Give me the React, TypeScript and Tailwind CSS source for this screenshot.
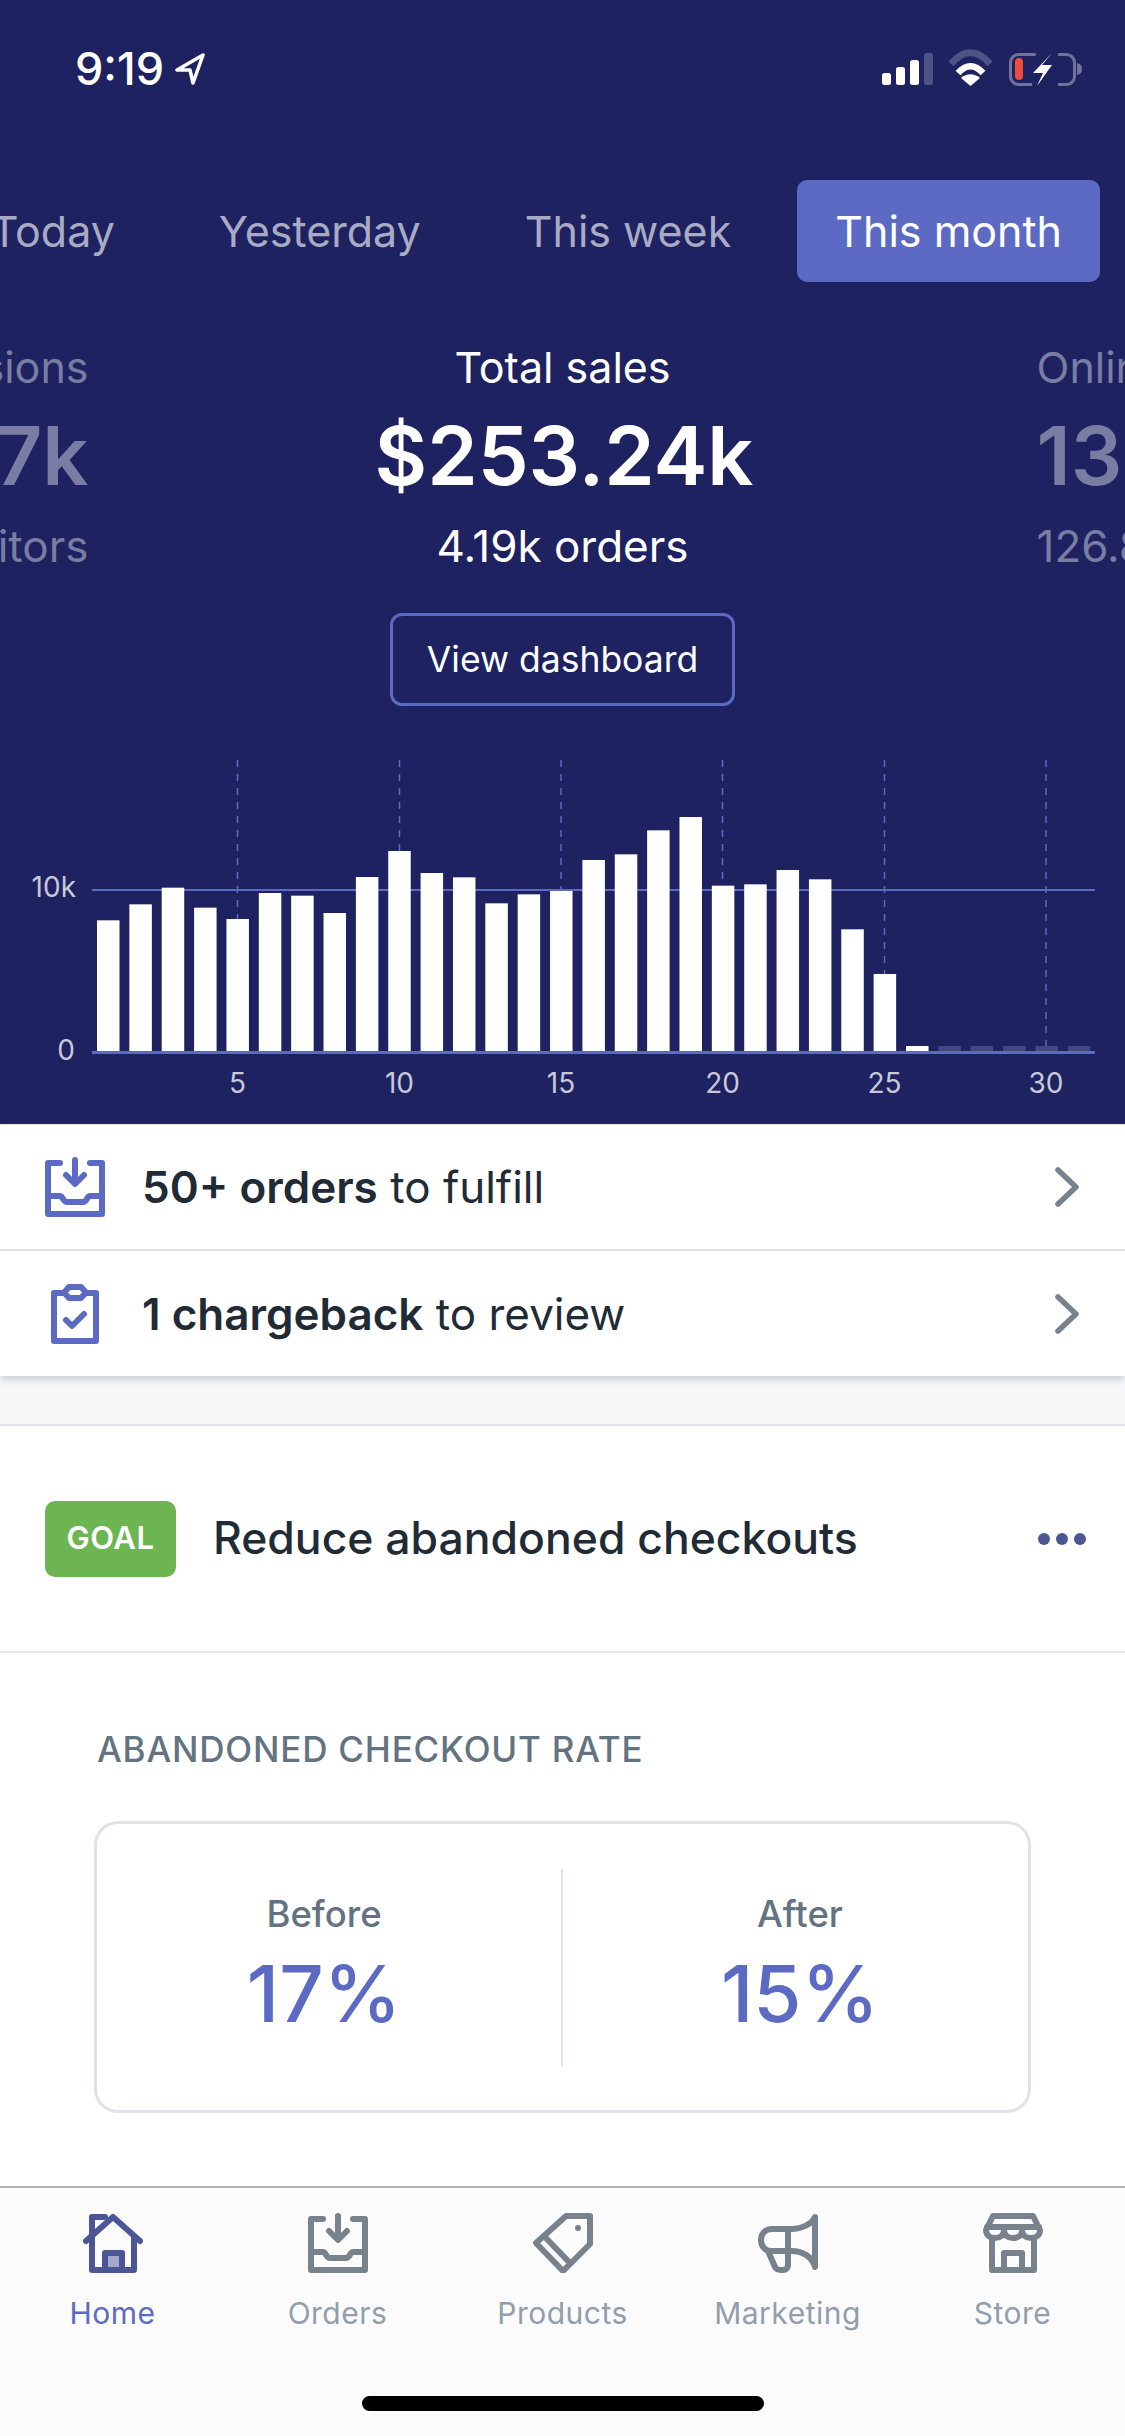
import React from "react";

const bars = [541, 493, 443, 503, 537, 459, 467, 519, 411, 333, 399, 412, 490, 463, 453, 360, 343, 271, 231, 437, 433, 390, 418, 568, 702, 918];

function Chart() {
  const y0 = 1052;
  return (
    <svg width="1125" height="374" viewBox="0 750 1125 374" className="block">
      {[237.5, 399.5, 561, 722.5, 884.5, 1046].map((x) => (
        <line key={x} x1={x} x2={x} y1={760} y2={1052} stroke="#5c6ac4" strokeWidth="1.5" strokeDasharray="7 7" />
      ))}
      <rect x="92" y="889" width="1003" height="2" fill="#5c6ac4" />
      {bars.map((t, i) => {
        const top = 740 + t / 3;
        return <rect key={i} x={97 + i * 32.36} y={top} width="22.5" height={y0 - top} fill="#ffffff" />;
      })}
      {[26, 27, 28, 29, 30].map((i) => (
        <rect key={i} x={97 + i * 32.36} y={1046} width="22.5" height="6" fill="#43477f" />
      ))}
      <rect x="92" y="1051" width="1003" height="3" fill="#5c6ac4" />
      <g fill="#c7c8d8" fontSize="28" fontFamily="Inter, sans-serif" textAnchor="middle">
        <text x="237.5" y="1093">5</text>
        <text x="399.5" y="1093">10</text>
        <text x="561" y="1093">15</text>
        <text x="722.5" y="1093">20</text>
        <text x="884.5" y="1093">25</text>
        <text x="1046" y="1093">30</text>
      </g>
      <g fill="#c7c8d8" fontSize="28" fontFamily="Inter, sans-serif" textAnchor="end">
        <text x="76" y="897">10k</text>
        <text x="75" y="1060">0</text>
      </g>
    </svg>
  );
}

function StatusIcons() {
  return (
    <svg width="193" height="32" viewBox="882 53 193 32" className="block overflow-visible">
      <rect x="882" y="73" width="9" height="12" rx="2.5" fill="#fff" />
      <rect x="896" y="67" width="9" height="18" rx="2.5" fill="#fff" />
      <rect x="910" y="60" width="9" height="25" rx="2.5" fill="#fff" />
      <rect x="924" y="53" width="9" height="32" rx="2.5" fill="#4d5387" />
      <path d="M951 64 C963 49 978 49 990 64" fill="none" stroke="#4d5387" strokeWidth="7" />
      <path d="M958 73 C966 64 975 64 983 73" fill="none" stroke="#fff" strokeWidth="6.5" />
      <path d="M961 78 C967 73 974 73 980 78 L970.5 86 Z" fill="#fff" />
      <rect x="1010.5" y="54.5" width="64" height="30" rx="8" fill="none" stroke="#6f739b" strokeWidth="3" />
      <rect x="1015" y="58" width="8" height="22" rx="4" fill="#ee4d3a" />
      <path d="M1036 52 H1058 V86 H1032 Z" fill="#1e2260" />
      <path d="M1052 53 L1033 73 H1043 L1037 86 L1052 65 H1042 Z" fill="#fff" />
      <path d="M1077 63 C1081 64 1082 66 1082 69 C1082 72 1081 74 1077 75 Z" fill="#6f739b" />
    </svg>
  );
}

function OrdersIcon({ color }: { color: string }) {
  return (
    <svg width="60" height="60" viewBox="0 0 60 60" className="block" fill="none" stroke={color} strokeWidth="6" strokeLinecap="round" strokeLinejoin="round">
      <path d="M15 6 H3 V57 H57 V6 H45" />
      <path d="M30 3 V26 M21 18 L30 27 L39 18" />
      <path d="M3 39 H15 C18 39 18 45 22 45 H38 C42 45 42 39 45 39 H57" />
    </svg>
  );
}

function ClipIcon() {
  return (
    <svg width="48" height="60" viewBox="0 0 48 60" className="block" fill="none" stroke="#5c6ac4" strokeWidth="6" strokeLinecap="round" strokeLinejoin="round">
      <path d="M13 9 H3 V57 H45 V9 H35" />
      <path d="M18 3 H30 L35 8.5 L30 14 H18 L13 8.5 Z" />
      <path d="M15 36 L21 42 L33 30" />
    </svg>
  );
}

function Chevron() {
  return (
    <svg width="26" height="40" viewBox="0 0 26 40" className="block" fill="none" stroke="#78828c" strokeWidth="5.5" strokeLinecap="round" strokeLinejoin="round">
      <path d="M4 3 L22 20 L4 37" />
    </svg>
  );
}

function HomeIcon() {
  return (
    <svg width="60" height="60" viewBox="0 0 60 60" className="block" fill="none" stroke="#4c5596" strokeWidth="6" strokeLinecap="round" strokeLinejoin="round">
      <rect x="22" y="40" width="17" height="17" fill="#a5a9cc" stroke="none" />
      <path d="M3 28 L30 4 L57 28" />
      <path d="M9 20 V4 H22" />
      <path d="M9 24 V57 H51 V24" />
      <path d="M22 57 V40 H39 V57" />
    </svg>
  );
}

function TagIcon() {
  return (
    <svg width="60" height="60" viewBox="0 0 60 60" className="block" fill="none" stroke="#78828c" strokeWidth="6" strokeLinecap="round" strokeLinejoin="round">
      <path d="M33 3 H57 V31 L30 58 L3 30 Z" />
      <path d="M12 24 L35 48" />
      <circle cx="45" cy="15" r="3" fill="#78828c" stroke="none" />
    </svg>
  );
}

function MegaphoneIcon() {
  return (
    <svg width="60" height="60" viewBox="0 0 60 60" className="block" fill="none" stroke="#78828c" strokeWidth="6" strokeLinecap="round" strokeLinejoin="round">
      <path d="M57 4 C54 11 44 16 33 16 H14 C7 16 3 21 3 27 C3 33 7 38 13 38 H33 C44 38 54 43 57 54 Z" />
      <path d="M30 16 V52 C30 55 28 57 25 57 H23 C20 57 18 56 17 54 L10 38" />
    </svg>
  );
}

function StoreIcon() {
  return (
    <svg width="60" height="60" viewBox="0 0 60 60" className="block" fill="none" stroke="#78828c" strokeWidth="6" strokeLinecap="round" strokeLinejoin="round">
      <path d="M10 3 H50 L57 17 C57 22 53 25 48 25 C43 25 39 22 39 17 C39 22 35 25 30 25 C25 25 21 22 21 17 C21 22 17 25 12 25 C7 25 3 22 3 17 Z" />
      <path d="M4 14 H56" />
      <path d="M9 26 V57 H51 V26" />
      <path d="M21 57 V40 H39 V57" />
    </svg>
  );
}

function TabItem({ icon, label, active }: { icon: React.ReactNode; label: string; active?: boolean }) {
  return (
    <div className="flex flex-col items-center">
      {icon}
      <div className={`mt-[20px] text-[30px] leading-[40px] tracking-[0.5px] ${active ? "text-[#5c6ac4]" : "text-[#919eab]"}`}>{label}</div>
    </div>
  );
}

export default function App() {
  return (
    <div className="w-[1125px] h-[2436px] overflow-hidden flex flex-col bg-white font-['Inter',sans-serif]">
      <div className="flex-1 min-h-0 overflow-hidden">
        <header className="h-[1124px] bg-[#1e2260] overflow-hidden">
          <div className="pt-[53px] pl-[75px] pr-[50px] h-[85px] flex items-start justify-between">
            <div className="flex items-center gap-[10px] text-white">
              <span className="text-[45px] leading-[32px] font-medium">9:19</span>
              <svg width="32" height="32" viewBox="0 0 32 32" className="block" fill="none" stroke="#fff" strokeWidth="3.5" strokeLinejoin="round">
                <path d="M29 2 L3 17 L16 17 L19 30 Z" />
              </svg>
            </div>
            <StatusIcons />
          </div>
          <div className="mt-[95px] h-[102px] flex justify-end gap-[28px] pr-[25px]">
            {["Today", "Yesterday", "This week"].map((t) => (
              <div key={t} className="px-[38px] shrink-0 flex items-center text-[43px] text-[#a9abc4]">{t}</div>
            ))}
            <div className="px-[38px] shrink-0 flex items-center text-[43px] text-white bg-[#5c6ac4] rounded-[10px]">This month</div>
          </div>
          <div className="mt-[55px] flex justify-center gap-[286px] whitespace-nowrap">
            <div className="w-[376px] shrink-0 text-right text-[#7a7da3]">
              <div className="text-[43px] leading-[60px]">Online sessions</div>
              <div className="mt-[14px] text-[81px] leading-[90px] font-semibold">156.67k</div>
              <div className="mt-[15px] text-[44px] leading-[60px]">98.32k visitors</div>
            </div>
            <div className="w-[376px] shrink-0 text-center text-white">
              <div className="text-[43px] leading-[60px]">Total sales</div>
              <div className="mt-[14px] text-[81px] leading-[90px] font-semibold">$253.24k</div>
              <div className="mt-[15px] text-[44px] leading-[60px]">4.19k orders</div>
            </div>
            <div className="w-[376px] shrink-0 text-left text-[#7a7da3]">
              <div className="text-[43px] leading-[60px]">Online store</div>
              <div className="mt-[14px] text-[81px] leading-[90px] font-semibold">132.5k</div>
              <div className="mt-[15px] text-[44px] leading-[60px]">126.8k visitors</div>
            </div>
          </div>
          <div className="mt-[37px] flex justify-center">
            <div className="w-[345px] h-[93px] border-[3px] border-[#5c6ac4] rounded-[12px] flex items-center justify-center text-[35.5px] text-white">View dashboard</div>
          </div>
          <div className="mt-[44px]">
            <Chart />
          </div>
        </header>

        <div className="relative bg-white shadow-[0_3px_7px_rgba(99,115,129,0.3)]">
          <div className="h-[127px] border-t border-b-2 border-[#dfe3e8] flex items-center pl-[45px] pr-[45px]">
            <OrdersIcon color="#5c6ac4" />
            <div className="ml-[37px] flex-1 text-[44px] text-[#212b36]"><span className="font-semibold">50+ orders</span> to fulfill</div>
            <Chevron />
          </div>
          <div className="h-[125px] flex items-center pl-[45px] pr-[45px]">
            <div className="w-[60px] flex justify-center"><ClipIcon /></div>
            <div className="ml-[37px] flex-1 text-[44px] text-[#212b36]"><span className="font-semibold">1 chargeback</span> to review</div>
            <Chevron />
          </div>
        </div>

        <div className="h-[50px] bg-[#f4f6f8] border-b-2 border-[#e3e5e8]" />

        <div className="h-[227px] border-b-2 border-[#e6e8ea] flex items-center pl-[45px] pr-[39px]">
          <div className="w-[131px] h-[76px] rounded-[10px] bg-[#6cb551] flex items-center justify-center text-[31px] font-semibold tracking-[0.5px] text-white">GOAL</div>
          <div className="ml-[37px] flex-1 text-[44.5px] font-medium text-[#212b36]">Reduce abandoned checkouts</div>
          <div className="flex gap-[6px]">
            <div className="w-[12px] h-[12px] rounded-full bg-[#4c5596]" />
            <div className="w-[12px] h-[12px] rounded-full bg-[#4c5596]" />
            <div className="w-[12px] h-[12px] rounded-full bg-[#4c5596]" />
          </div>
        </div>

        <div className="pt-[71px] pl-[94px]">
          <div className="pl-[3px] text-[35px] leading-[50px] font-medium tracking-[0.8px] text-[#637381]">ABANDONED CHECKOUT RATE</div>
          <div className="mt-[47px] w-[937px] h-[292px] border-[3px] border-[#dfe3e8] rounded-[24px] flex items-center">
            <div className="w-[464px] shrink-0 h-full flex flex-col items-center pt-[65px] pr-[10px]">
              <div className="text-[36.5px] leading-[50px] font-medium text-[#637381]">Before</div>
              <div className="mt-[10px] text-[78px] leading-[90px] font-medium text-[#5c6ac4]">17%</div>
            </div>
            <div className="w-[2px] h-[197px] bg-[#dfe3e8]" />
            <div className="flex-1 h-full flex flex-col items-center pt-[65px] pl-[9px]">
              <div className="text-[36.5px] leading-[50px] font-medium text-[#637381]">After</div>
              <div className="mt-[10px] text-[78px] leading-[90px] font-medium text-[#5c6ac4]">15%</div>
            </div>
          </div>
        </div>
      </div>

      <nav className="h-[250px] shrink-0 border-t-2 border-[#b2b2b2] bg-[#fbfbfb] flex flex-col pt-[25px]">
        <div className="grid grid-cols-5">
          <TabItem icon={<HomeIcon />} label="Home" active />
          <TabItem icon={<OrdersIcon color="#78828c" />} label="Orders" />
          <TabItem icon={<TagIcon />} label="Products" />
          <TabItem icon={<MegaphoneIcon />} label="Marketing" />
          <TabItem icon={<StoreIcon />} label="Store" />
        </div>
        <div className="mt-[63px] self-center w-[402px] h-[15px] rounded-full bg-black" />
      </nav>
    </div>
  );
}
